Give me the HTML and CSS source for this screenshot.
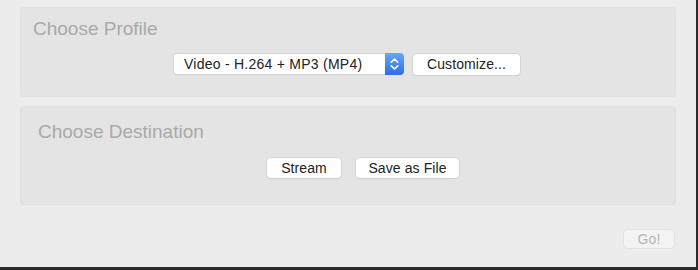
FILE: index.html
```html
<!DOCTYPE html>
<html lang="en">
<head>
    <meta charset="utf-8"/>
    <title>Convert</title>
    <link rel="stylesheet" href="styles.css">
</head>
<body>
<div class="window">
    <section class="panel profile">
        <h2 class="panelTitle">Choose Profile</h2>
        <div class="row">
            <div class="popup">
                <span class="popupLabel">Video - H.264 + MP3 (MP4)</span>
                <span class="stepper">
                    <svg width="19" height="22" viewBox="0 0 19 22">
                        <path d="M6.2 9.2 L9.5 6 L12.8 9.2 M6.2 12.8 L9.5 16 L12.8 12.8" fill="none" stroke="#fff" stroke-width="1.6" stroke-linecap="round" stroke-linejoin="round"/>
                    </svg>
                </span>
            </div>
            <button class="btn customize">Customize...</button>
        </div>
    </section>
    <section class="panel destination">
        <h2 class="panelTitle">Choose Destination</h2>
        <div class="row">
            <button class="btn stream">Stream</button>
            <button class="btn saveFile">Save as File</button>
        </div>
    </section>
    <div class="footer">
        <button class="btn go" disabled>Go!</button>
    </div>
</div>
</body>
</html>
```
FILE: styles.css
```css
body{
    margin: 0;
    background: #ececec;
    font-family: "Liberation Sans", Arial, sans-serif;
}
.window{
    box-sizing: border-box;
    width: 698px;
    height: 270px;
    padding: 7px 20px 0 20px;
    background: #ececec;
    border-right: 2px solid #2a2a2a;
    border-bottom: 3px solid #2a2a2a;
}
.panel{
    box-sizing: border-box;
    background: #e4e4e4;
    border-radius: 4px;
    box-shadow: inset 0 0 0 1px #e1e1e1;
}
.profile{
    height: 90px;
    padding: 11px 13px 0 13px;
}
.destination{
    height: 99px;
    margin-top: 9px;
    padding: 15px 18px 0 18px;
}
.panelTitle{
    margin: 0;
    font-size: 19px;
    line-height: 22px;
    font-weight: normal;
    color: #a9a9a9;
}
.row{
    display: flex;
    justify-content: center;
    align-items: center;
    gap: 9px;
}
.profile .row{
    margin-top: 13px;
    padding-right: 2px;
}
.destination .row{
    margin-top: 15px;
    gap: 15px;
    padding-left: 30px;
}
.popup{
    display: flex;
    align-items: center;
    width: 230px;
    height: 22px;
}
.popupLabel{
    box-sizing: border-box;
    flex: 1;
    height: 20px;
    padding-left: 10px;
    background: #fff;
    border-radius: 4px 0 0 4px;
    box-shadow: 0 0 0 1px #d6d6d6, 0 1px 1px rgba(0,0,0,0.12);
    font-size: 14px;
    line-height: 20px;
    letter-spacing: 0.25px;
    color: #222;
}
.stepper{
    width: 19px;
    height: 22px;
    border-radius: 0 4px 4px 0;
    background: linear-gradient(#6aa6f4, #2f6ee3);
}
.stepper svg{
    display: block;
}
.btn{
    box-sizing: border-box;
    height: 21px;
    padding: 0;
    background: #fff;
    border: none;
    border-radius: 4px;
    box-shadow: 0 0 0 1px #d4d4d4, 0 1px 1px rgba(0,0,0,0.15);
    font-family: "Liberation Sans", Arial, sans-serif;
    font-size: 14px;
    letter-spacing: 0.1px;
    color: #222;
}
.customize{
    width: 107px;
}
.stream{
    width: 74px;
    height: 20px;
}
.saveFile{
    width: 103px;
    height: 20px;
}
.footer{
    display: flex;
    justify-content: flex-end;
    margin-top: 25px;
    padding-right: 2px;
}
.go{
    width: 50px;
    height: 18px;
    background: #f3f3f3;
    color: #b4b4b4;
    box-shadow: 0 0 0 1px #e2e2e2;
}
```
